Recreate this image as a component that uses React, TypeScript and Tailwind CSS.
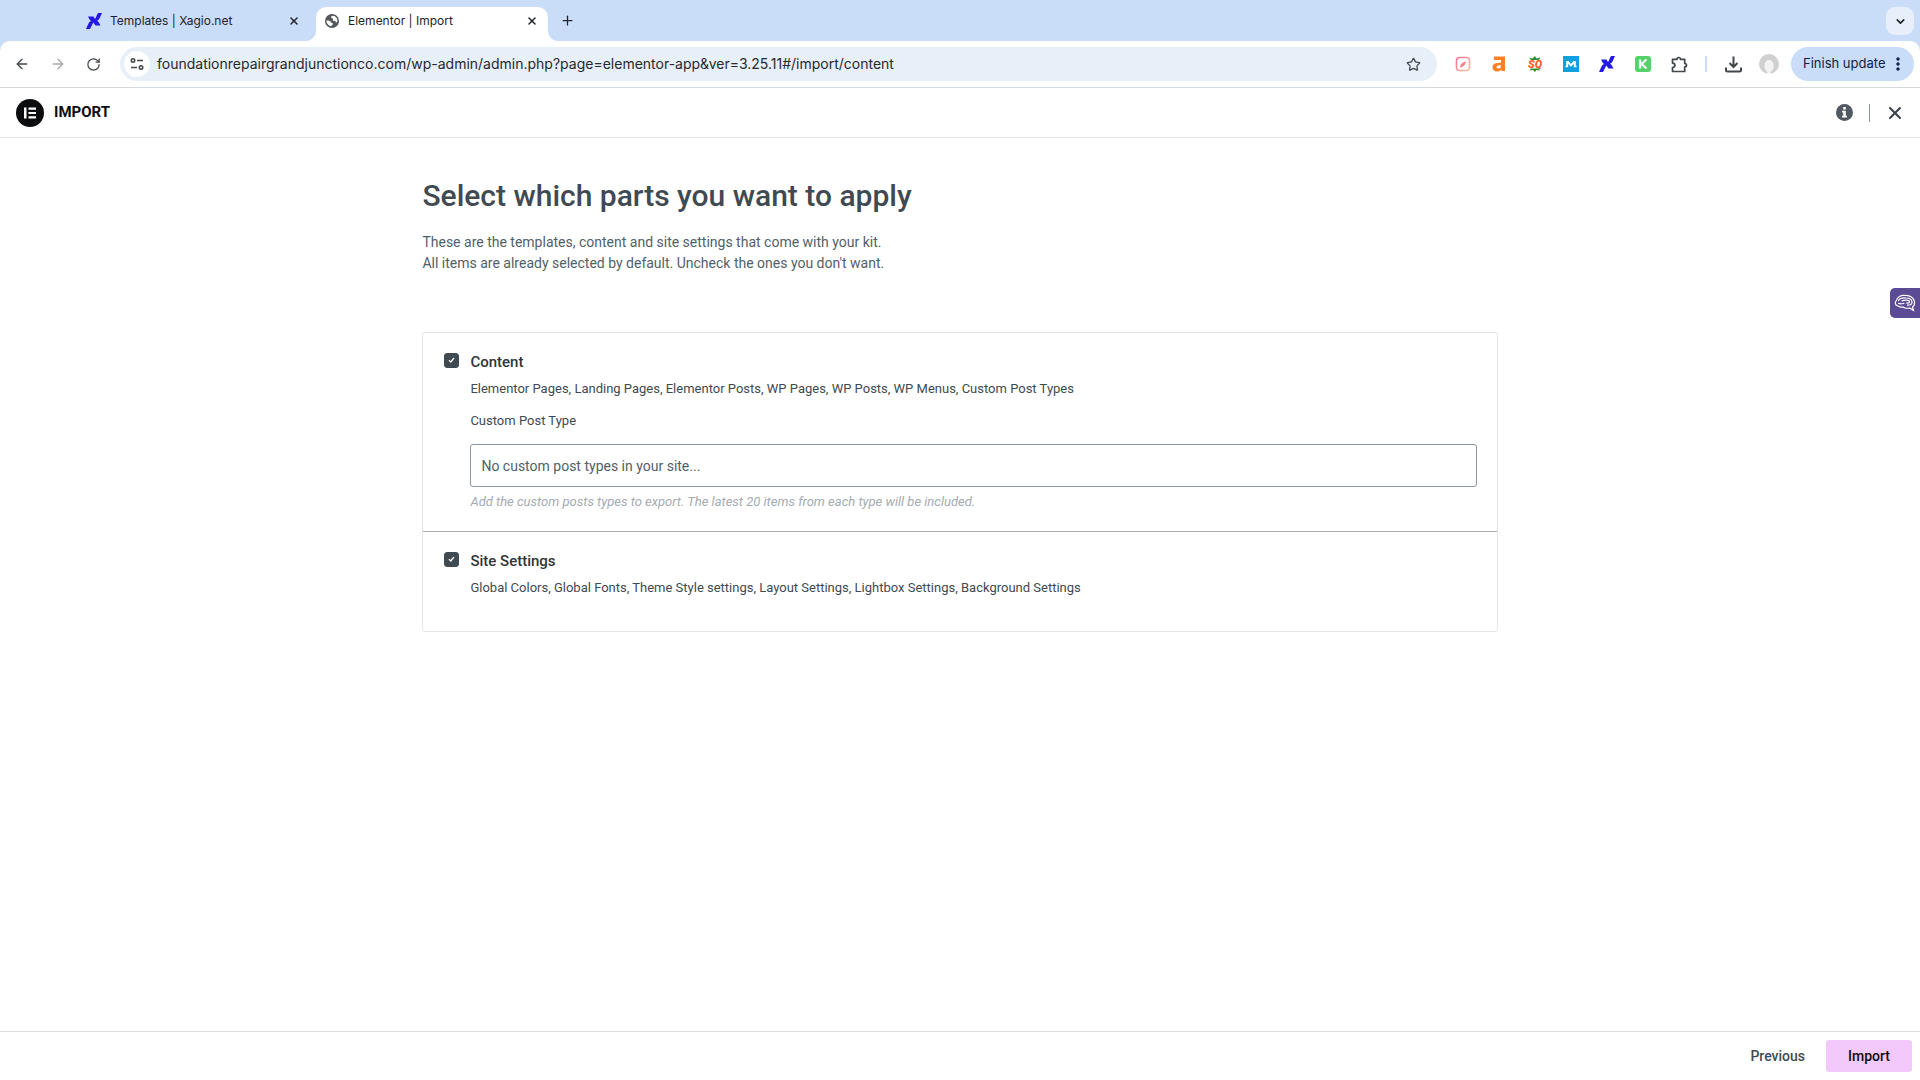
import type { ReactNode } from "react";
import {
  ArrowLeft,
  ArrowRight,
  ChevronDown,
  Plus,
  RotateCw,
  Star,
  X,
} from "lucide-react";
import { MdMoreVert } from "react-icons/md";

const kitParts = [
  {
    id: "content",
    title: "Content",
    summary:
      "Elementor Pages, Landing Pages, Elementor Posts, WP Pages, WP Posts, WP Menus, Custom Post Types",
    hasPostTypes: true,
  },
  {
    id: "settings",
    title: "Site Settings",
    summary:
      "Global Colors, Global Fonts, Theme Style settings, Layout Settings, Lightbox Settings, Background Settings",
    hasPostTypes: false,
  },
];

function XagioIcon() {
  return (
    <svg width="16" height="16" viewBox="0 0 16 16" fill="#2418e4">
      <path d="M2 3.500h5.500l1.500 2.500c1-1.500 2-4.500 3-6h4l-2.500 5.500c-.6 1.300-1.500 2-2.800 2.300.8.200 1.500.7 2 1.500l1.800 3.200H9.500L7.300 9.500 4 16H0l2.500-5.500C3.200 9 4 8.300 5.500 8 4.500 7.800 3.800 7 3.300 6z" />
    </svg>
  );
}

function GlobeIcon() {
  return (
    <svg width="14" height="14" viewBox="0 0 14 14">
      <circle cx="7" cy="7" r="7" fill="#55595e" />
      <path d="M8 1.700c-1.400.2-2 .9-1.800 1.700.2.800 1.500.6 1.800 1.400.2.600-.4 1-.1 1.600.5.800 1.900.1 2.500.8.400.500.300 1.200 1 1.200.5 0 .8-.6 1-1.400C12.500 4.100 10.600 1.900 8 1.700zM1.500 6.600c1.300-.2 3 0 4 .8.700.6.500 1.300 1.300 1.600.7.200 1.300.2 1.200.9-.1.800-1.200.7-1.300 1.400-.1.500.1.800-.3 1C3.500 12 1.300 9.500 1.500 6.600z" fill="#fff" />
    </svg>
  );
}

const extensions: { name: string; icon: ReactNode }[] = [
  {
    name: "Notes",
    icon: (
      <svg width="16" height="16" viewBox="0 0 16 16" fill="none">
        <defs>
          <linearGradient id="notes" x1="0" x2="1" y1="0" y2="1">
            <stop stopColor="#fb6f9c" />
            <stop offset="1" stopColor="#fdc09a" />
          </linearGradient>
        </defs>
        <rect x="1.500" y="1.500" width="13" height="13" rx="3" stroke="url(#notes)" strokeWidth="1.600" />
        <path d="M5 11.500c0-3 1.800-5 6-6-.3 3.500-2.500 5.300-6 6z" fill="#fb7f8c" />
      </svg>
    ),
  },
  {
    name: "Ahrefs",
    icon: (
      <svg width="14" height="16" viewBox="0 0 14 16" fill="#ff7f27">
        <path
          fillRule="evenodd"
          d="M2 0.500h11v14.500H9.500v-1.500C8.300 15 6.800 15.500 5 15.500 2.200 15.500.5 13.800.5 11.300.5 8 3 6.700 9 6.700V4H2zM9 9.300c-3.200 0-4.500.5-4.500 1.800 0 2.200 4.500 1.700 4.500-.5z"
        />
      </svg>
    ),
  },
  {
    name: "SEOquake",
    icon: (
      <span className="relative grid size-4 place-items-center font-['Roboto',sans-serif] text-[11px] font-black italic leading-none text-[#ff5a1f]">
        <svg className="absolute inset-0" width="16" height="16" viewBox="0 0 16 16" fill="#2f8f2f">
          <path d="M2 1.500l3.500 1L8 0l1.500 2.500 4-1L12 4H4zM2.500 14.500L4 12.500h8l1 2-3.500-.5L8 16l-2-2z" />
        </svg>
        <span className="relative">SQ</span>
      </span>
    ),
  },
  {
    name: "Moz",
    icon: (
      <svg width="16" height="16" viewBox="0 0 16 16">
        <path d="M0 0h16v16H0z" fill="#11a0df" />
        <path d="M2.500 11.300v-1.500h.7V5h2.300L8 8l2.500-3h2.300v4.800h.7v1.500h-2.700V7.700L8 10.800 5.200 7.700v3.600z" fill="#fff" />
      </svg>
    ),
  },
  { name: "Xagio", icon: <XagioIcon /> },
  {
    name: "Keywords Everywhere",
    icon: (
      <svg width="16" height="16" viewBox="0 0 16 16">
        <rect width="16" height="16" rx="3" fill="#55d168" />
        <path d="M5 3.500v9M11.500 3.500L6.500 8l5 4.500" stroke="#fff" strokeWidth="2.200" fill="none" />
      </svg>
    ),
  },
  {
    name: "Extensions",
    icon: (
      <svg width="17" height="17" viewBox="0 0 17 17" fill="none" stroke="#42474b" strokeWidth="1.700" strokeLinejoin="round">
        <path d="M1.500 3.300H6C6 .9 9.500.9 9.500 3.300h4.200v4.200c2.400 0 2.400 3.300 0 3.300v4.700H1.500v-4c3.200-.2 3.200-4.200 0-4.400z" />
      </svg>
    ),
  },
];

function TabStrip() {
  return (
    <div className="flex h-[41px] items-end bg-[#c9ddf8] pl-[76px] pr-1.5 text-xs text-[#1f2328]">
      <div className="flex h-[34px] w-60 items-center pb-3.5 pl-2.5 pr-4 pt-2">
        <XagioIcon />
        <span className="ml-2 flex-1">Templates | Xagio.net</span>
        <button type="button" aria-label="Close Templates tab">
          <X size={12} strokeWidth={3} />
        </button>
      </div>
      <div className="relative flex h-[34px] w-[232px] items-center rounded-t-[10px] bg-white pb-3.5 pl-[9px] pr-2.5 pt-2">
        {/* Flared feet of the active tab */}
        <svg className="absolute -left-2.5 bottom-0" width="10" height="10" fill="#fff">
          <path d="M10 0v10H0C5.500 10 10 5.500 10 0z" />
        </svg>
        <svg className="absolute -right-2.5 bottom-0" width="10" height="10" fill="#fff">
          <path d="M0 0v10h10C4.500 10 0 5.500 0 0z" />
        </svg>
        <GlobeIcon />
        <span className="ml-[9px] flex-1">Elementor | Import</span>
        <button type="button" aria-label="Close Elementor tab">
          <X size={12} strokeWidth={3} />
        </button>
      </div>
      <button type="button" aria-label="New tab" className="mb-[13px] ml-3">
        <Plus size={15} />
      </button>
      <button
        type="button"
        aria-label="Search tabs"
        className="mb-1.5 ml-auto grid size-7 place-items-center rounded-[9px] bg-[#e6effa]"
      >
        <ChevronDown size={13} strokeWidth={3} />
      </button>
    </div>
  );
}

function Toolbar() {
  return (
    <div className="bg-[#c9ddf8]">
      <div className="flex h-[47px] items-center rounded-t-[10px] border-b border-[#d5d9dd] bg-white pl-3.5 pr-1.5 text-[#42474b]">
        <button type="button" aria-label="Back">
          <ArrowLeft size={16} />
        </button>
        <button type="button" aria-label="Forward" className="ml-5 text-[#a6a9ac]">
          <ArrowRight size={16} />
        </button>
        <button type="button" aria-label="Reload" className="ml-5">
          <RotateCw size={15} />
        </button>
        <div className="ml-[19px] flex h-[34px] flex-1 items-center rounded-full bg-[#e7eff8] pl-1 pr-4">
          <span className="grid size-[26px] place-items-center rounded-full bg-white">
            <svg width="14" height="14" viewBox="0 0 14 14" fill="none" stroke="#42474b" strokeWidth="1.600">
              <circle cx="3" cy="3.500" r="1.700" />
              <path d="M7 3.500h6M1 10.500h6" />
              <circle cx="11" cy="10.500" r="1.700" />
            </svg>
          </span>
          <input
            type="text"
            aria-label="Address"
            defaultValue="foundationrepairgrandjunctionco.com/wp-admin/admin.php?page=elementor-app&ver=3.25.11#/import/content"
            className="ml-[7px] flex-1 bg-transparent text-sm text-[#26292d] outline-none"
          />
          <button type="button" aria-label="Bookmark">
            <Star size={15} />
          </button>
        </div>
        <div className="ml-3.5 flex items-center gap-3">
          {extensions.map((ext) => (
            <button
              key={ext.name}
              type="button"
              aria-label={ext.name}
              className="grid size-6 place-items-center"
            >
              {ext.icon}
            </button>
          ))}
        </div>
        <span className="ml-3.5 h-4 w-0.5 bg-[#c9ddf8]" />
        <button type="button" aria-label="Downloads" className="ml-[18px]">
          <svg width="17" height="17" viewBox="0 0 17 17" fill="none" stroke="#42474b" strokeWidth="2">
            <path d="M8.500.5v10M4.500 7l4 4 4-4M1 11.500V14c0 1 .5 1.500 1.500 1.500h12c1 0 1.500-.5 1.500-1.500v-2.500" />
          </svg>
        </button>
        <button type="button" aria-label="Profile" className="ml-[17px]">
          <svg width="20" height="20" viewBox="0 0 20 20">
            <circle cx="10" cy="10" r="10" fill="#d0d0d0" />
            <path d="M8 20c.5-1.500 0-2.500-1-3.500C4.500 13.500 5 6 10 6s6 7.500 3 10.500c-1 1-1.500 2-1 3.500z" fill="#f3f3f3" />
          </svg>
        </button>
        <button
          type="button"
          className="ml-3 flex h-[34px] w-[123px] items-center rounded-full bg-[#c9ddf8] pl-3 text-[13px] text-[#0b2148]"
        >
          Finish update
          <MdMoreVert size={20} className="ml-[3px]" />
        </button>
      </div>
    </div>
  );
}

function AppHeader() {
  return (
    <header className="flex h-[50px] items-center border-b border-[#e3e5e8] pl-4 pr-[15px]">
      <svg width="28" height="28" viewBox="0 0 28 28">
        <circle cx="14" cy="14" r="14" fill="#0c0d0e" />
        <path d="M8 8.500h2.500v11H8zM12.500 8.500H20v2.200h-7.500zM12.500 12.900H20v2.200h-7.500zM12.500 17.300H20v2.200h-7.500z" fill="#fff" />
      </svg>
      <h1 className="mb-0.5 ml-2.5 text-[15px] font-bold leading-5 text-[#0c0d0e]">IMPORT</h1>
      <button type="button" aria-label="Info" className="ml-auto">
        <svg width="17" height="17" viewBox="0 0 17 17">
          <circle cx="8.500" cy="8.500" r="8.500" fill="#515962" />
          <path d="M7.200 3h2.600v2.500H7.200zM6 6.800h3.800v5H11v1.700H6v-1.700h1.200V8.500H6z" fill="#fff" />
        </svg>
      </button>
      <span className="ml-4 h-[18px] w-px bg-[#8a929b]" />
      <button type="button" aria-label="Close" className="ml-[15px] text-[#3f444b]">
        <X size={20} strokeWidth={2.5} />
      </button>
    </header>
  );
}

function KitPart({ part }: { part: (typeof kitParts)[number] }) {
  return (
    <section className="flex items-start pb-5 pl-[21px] pr-5 pt-5 not-last:border-b not-last:border-[#a9adb1] last:pb-[34px]">
      <span className="relative grid size-[15px]">
        <input
          id={part.id}
          type="checkbox"
          defaultChecked
          className="peer size-[15px] appearance-none rounded-[3px] border border-[#3f4a52] checked:bg-[#3f4a52]"
        />
        <svg
          className="pointer-events-none absolute inset-0 hidden peer-checked:block"
          viewBox="0 0 15 15"
          fill="none"
          stroke="#fff"
          strokeWidth="1.300"
        >
          <path d="M5 7.200l1.800 1.800L10 5" />
        </svg>
      </span>
      <div className="ml-[11px] flex-1">
        <label htmlFor={part.id} className="block text-[15px] font-medium leading-[18px] text-[#2f3539]">
          {part.title}
        </label>
        <p className="mt-[9px] text-[13px] leading-[18px] text-[#3f4a52]">{part.summary}</p>
        {part.hasPostTypes && (
          <>
            <label htmlFor="post-types" className="mt-3.5 block text-[13px] leading-[18px] text-[#3f4a52]">
              Custom Post Type
            </label>
            <input
              id="post-types"
              type="text"
              placeholder="No custom post types in your site..."
              className="mt-3.5 block h-[43px] w-full rounded-[3px] border border-[#8b959f] px-2.5 text-sm outline-none placeholder:text-[#515f69]"
            />
            <p className="mt-1.5 text-[13px] italic leading-[18px] text-[#a4abb1]">
              Add the custom posts types to export. The latest 20 items from each type will be included.
            </p>
          </>
        )}
      </div>
    </section>
  );
}

export default function App() {
  return (
    <div className="flex min-h-screen flex-col bg-white font-[Roboto,sans-serif]">
      <div className="font-[Inter,sans-serif]">
        <TabStrip />
        <Toolbar />
      </div>
      <AppHeader />

      <main className="mx-auto w-14/25 flex-1">
        <h2 className="mt-10 text-[30px] font-medium leading-9 text-[#3f4a52]">
          Select which parts you want to apply
        </h2>
        <p className="mt-[18px] text-sm leading-[21px] text-[#515f69]">
          These are the templates, content and site settings that come with your kit.
          <br />
          All items are already selected by default. Uncheck the ones you don't want.
        </p>
        <div className="mt-[58px] rounded-[3px] border border-[#e3e5e8]">
          {kitParts.map((part) => (
            <KitPart key={part.id} part={part} />
          ))}
        </div>
      </main>

      {/* Assistant launcher pinned to the window edge */}
      <button
        type="button"
        aria-label="Open assistant"
        className="fixed right-0 top-72 grid h-[30px] w-[30px] place-items-center rounded-l-[5px] bg-[#5b4a94]"
      >
        <svg width="22" height="18" viewBox="0 0 22 18" fill="none" stroke="#fff" strokeWidth="1.200" strokeLinecap="round">
          <path d="M4 12C1 11.500 0.500 8 2.500 6.500 3 3 7 1 11 1.500c5-.5 9 2.500 9.500 6.500.3 2.500-.5 4-2 5l1 3.500-4-2.500c-3 .5-5 .5-6.500-1-2 .5-3.500 0-5-1z" />
          <path d="M4.500 6.500C6 4 9 3.800 12 4c3.500 0 6 1.500 6 4.200 0 2-2 3-4.500 3M4.500 9.300c1.500.8 4 .5 5.500 0M8 7c1-.8 2.500-.8 4-.8 2 0 3.500.6 3.500 1.800 0 1-1.500 1.200-3 1" />
        </svg>
      </button>

      <footer className="flex h-[49px] items-center justify-end border-t border-[#dcdfe2] px-2 text-sm font-medium">
        <button type="button" className="text-[#3f4a52]">
          Previous
        </button>
        <button type="button" className="ml-[21px] h-8 w-[86px] rounded-[3px] bg-[#f3c8fa] text-[#0c0d0e]">
          Import
        </button>
      </footer>
    </div>
  );
}
